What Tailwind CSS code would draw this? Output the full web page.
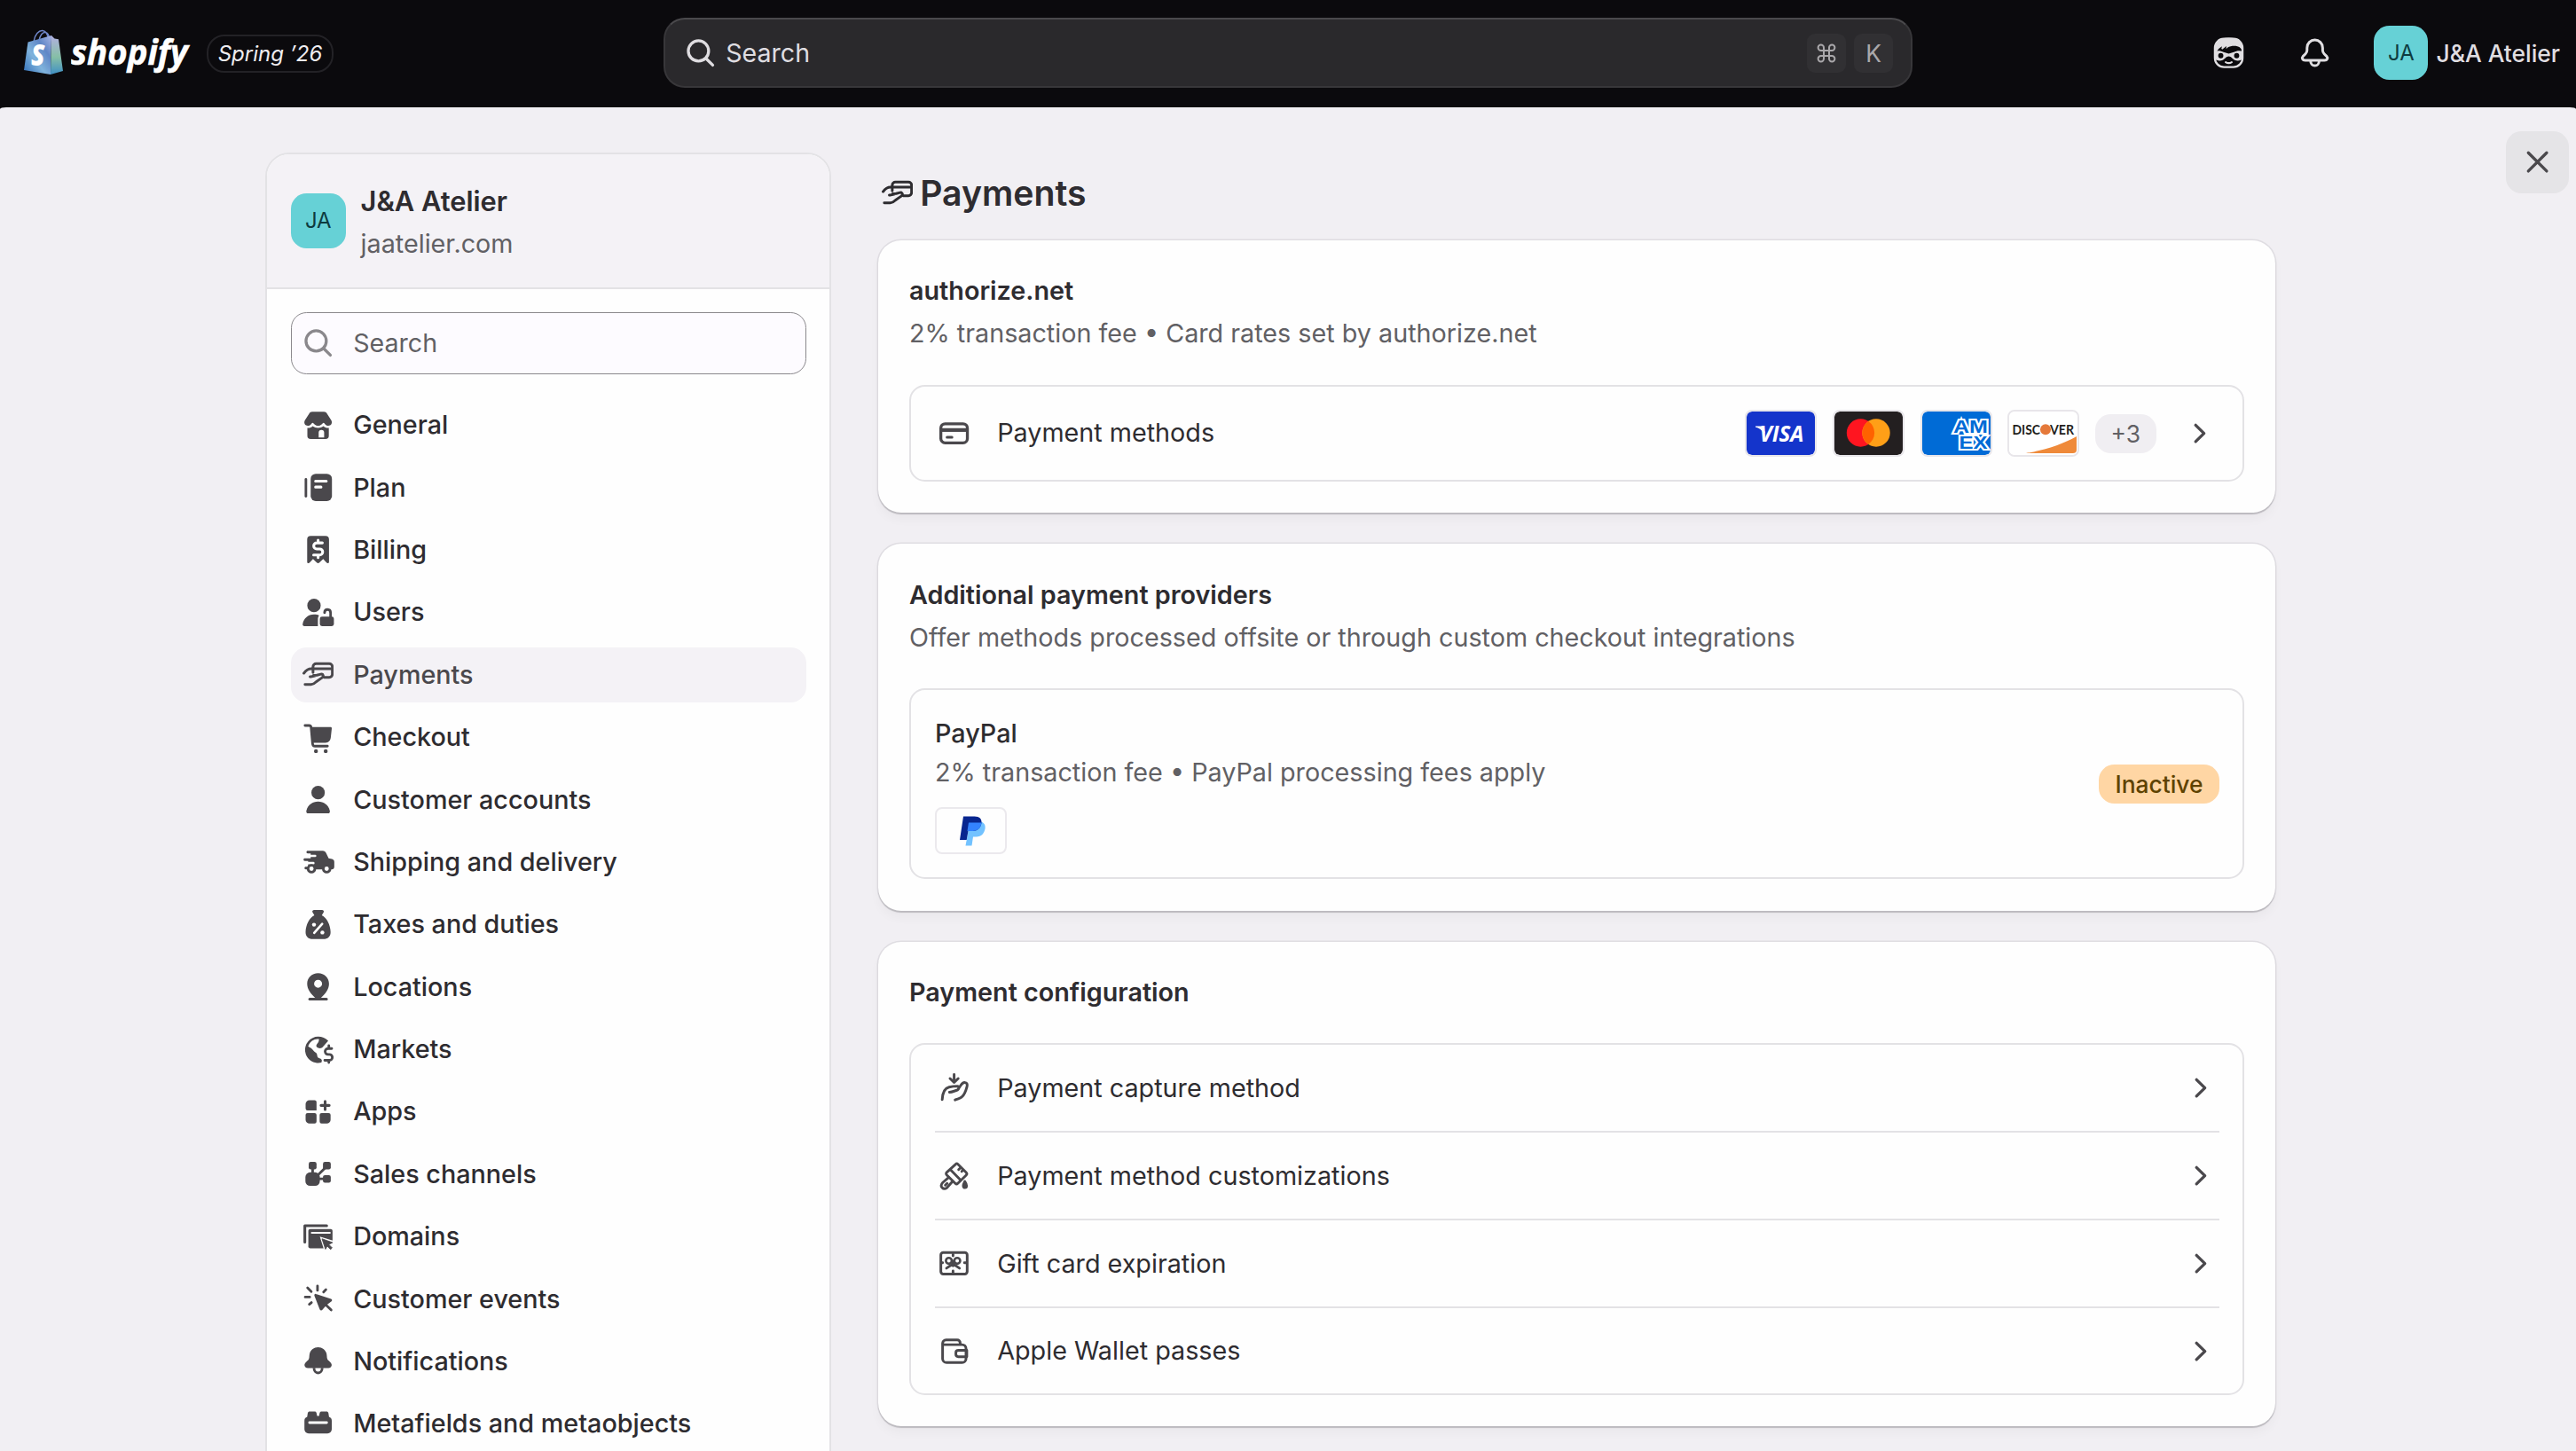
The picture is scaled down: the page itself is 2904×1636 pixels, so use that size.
<!DOCTYPE html>
<html lang="en">
<head>
<meta charset="utf-8">
<title>Payments</title>
<script src="https://cdn.jsdelivr.net/npm/@tailwindcss/browser@4"></script>
</head>
<body class="h-[1636px] w-[2904px] overflow-hidden bg-[#0b0a0d] font-['Inter',sans-serif] text-[28.740px] leading-[44px] text-[#2e2c30]">

<svg class="hidden">
  <symbol id="hand-card" viewBox="0 0 16 16"><g fill="none" stroke="currentColor" stroke-width="1.35" stroke-linecap="round" stroke-linejoin="round"><path d="M.7 7.3C1.6 6 2.7 5 4.6 5M5.4 6.900V4A1.600 1.600 0 0 1 7 2.400h6.700A1.600 1.600 0 0 1 15.300 4v3.800A1.600 1.600 0 0 1 13.700 9.400H11M5.400 5h9.900"/><path d="M3.900 9.100C5 8.900 6 9 7.400 8.300L5.600 8.400M7.400 8.300l2-.5c1.300-.2 1.600 1.200.6 1.800L7 11.700c-.8.8-1.600 1.400-2.600 1.400H1.300"/></g></symbol>
  <symbol id="chevron" viewBox="0 0 16 16"><path d="M6 3.800 10.300 8 6 12.200" fill="none" stroke="currentColor" stroke-width="1.500" stroke-linecap="round" stroke-linejoin="round"/></symbol>
  <symbol id="search" viewBox="0 0 16 16"><g fill="none" stroke="currentColor" stroke-width="1.500" stroke-linecap="round"><circle cx="7" cy="7" r="5.200"/><path d="m10.900 10.900 3.400 3.400"/></g></symbol>
</svg>

<!-- Top bar -->
<header class="grid h-[121px] grid-cols-[748px_1408px_748px]">
  <div class="flex items-center pl-[26px]">
    <svg class="mt-[-4px] h-[53px] w-[46px]" viewBox="0 0 46 53">
      <defs>
        <linearGradient id="bagFront" x1="0" y1="1" x2="1" y2="0"><stop offset="0" stop-color="#2f6db8"/><stop offset=".4" stop-color="#7fb3dc"/><stop offset=".7" stop-color="#5f86c6"/><stop offset="1" stop-color="#a9b4e4"/></linearGradient>
        <linearGradient id="bagSide" x1="0" y1="0" x2="0" y2="1"><stop offset="0" stop-color="#b3b0e2"/><stop offset=".55" stop-color="#86bfa6"/><stop offset="1" stop-color="#3f8fc4"/></linearGradient>
      </defs>
      <path d="M12 15C13 7 18 2 22 2.500c4 .5 6 5 6.500 10M18 14c1-6 4-10 7-9.500 3 .5 4.500 4 5 8" fill="none" stroke="#6f86c8" stroke-width="1.500"/>
      <path d="M5.500 15.500 32 8 31 52 1 47z" fill="url(#bagFront)"/>
      <path d="M32 8l3.500 3.500 4.500.7L45 48l-14 4z" fill="url(#bagSide)"/>
      <text x="9" y="42" font-family="Open Sans" font-style="italic" font-weight="800" font-size="34" fill="#fff" textLength="15.500" lengthAdjust="spacingAndGlyphs">S</text>
    </svg>
    <svg class="ml-[8px] mt-[4px] h-[72px] w-[150px]" viewBox="0 -12 150 72">
      <text x="0" y="34" font-family="Open Sans" font-style="italic" font-weight="700" font-size="40" fill="#fff" stroke="#fff" stroke-width=".6" textLength="132" lengthAdjust="spacingAndGlyphs">shopify</text>
    </svg>
    <div class="ml-[3px] flex h-[43px] w-[143px] items-center justify-center rounded-[20px] border-2 border-[#232226] text-[24px] italic text-[#efedf0] whitespace-nowrap">Spring ’26</div>
  </div>

  <div class="flex items-center">
    <div class="mb-[2px] flex h-[79px] w-full items-center rounded-[24px] border-2 border-[#38373a] border-t-[#4a494c] bg-[#2a292c] pl-[22px] pr-[20px] text-[#dfdde1]">
      <svg class="size-[35.200px]"><use href="#search"/></svg>
      <span class="ml-[11px] grow text-[28.600px]">Search</span>
      <kbd class="flex size-[44px] items-center justify-center rounded-[9px] bg-[#313033] text-[#a9a7aa]">
        <svg class="size-[24px]" viewBox="0 0 24 24" fill="none" stroke="currentColor" stroke-width="2"><path d="M9 9V5.800A3.200 3.200 0 1 0 5.800 9h12.400A3.200 3.200 0 1 0 15 5.800v12.400a3.200 3.200 0 1 0 3.200-3.200H5.800A3.200 3.200 0 1 0 9 18.200z"/></svg>
      </kbd>
      <kbd class="ml-[9px] flex size-[44px] items-center justify-center rounded-[9px] bg-[#313033] font-['Inter',sans-serif] text-[26.400px] text-[#a9a7aa]">K</kbd>
    </div>
  </div>

  <div class="flex items-center justify-end pb-[2px] pr-[18px] text-[#e0dee1]">
    <svg class="mr-[1px] size-[35px]" viewBox="0 0 36 36">
      <rect x="2" y="1.800" width="32" height="32.800" rx="10.500" fill="none" stroke="currentColor" stroke-width="2.400"/>
      <path d="M1 15C1 5.500 7 .6 18 .6s17 4.900 17 14.400l-1 2c-1-3.500-2.500-5.700-6-6.500-4-.8-8-.3-11.500 1.500l-1.500 1.500.3-3.300-4.800 4-1-1 .8-2.600C7.500 12 5.500 14 4 17H1z" fill="currentColor"/>
      <path fill-rule="evenodd" d="M1 16.500c4-1.500 8-1 11 .8l6 1.700 6-1.700c3-1.800 7-2.300 11-.8v8c-3 2.700-6.500 3.500-10 2-2.500-1-4-4.300-7-4.300s-4.500 3.300-7 4.300c-3.500 1.500-7 .7-10-2zM8.800 18.300a3 3 0 1 0 0 6 3 3 0 0 0 0-6zM27.200 18.300a3 3 0 1 0 0 6 3 3 0 0 0 0-6z" fill="currentColor"/>
      <path d="M14.500 29c2.200 1.300 4.800 1.300 7 0" fill="none" stroke="currentColor" stroke-width="2.200" stroke-linecap="round"/>
    </svg>
    <svg class="ml-[61px] size-[35.200px]" viewBox="0 0 16 16" fill="none" stroke="currentColor" stroke-width="1.350" stroke-linejoin="round"><path d="M8 1.400a4 4 0 0 0-4 4v1.300c0 .7-.3 1.300-.8 1.800L2 9.700c-.9 1-.3 2.100 1 2.100h10c1.300 0 1.900-1.100 1-2.100l-1.200-1.200c-.5-.5-.8-1.100-.8-1.800V5.400a4 4 0 0 0-4-4zM5.800 12c0 1.500 1 2.600 2.200 2.600s2.200-1.100 2.200-2.600"/></svg>
    <div class="ml-[49px] flex size-[61px] items-center justify-center rounded-[17.600px] bg-[#66d1d6] text-[24px] text-[#0e3b3f]">JA</div>
    <span class="ml-[9px] whitespace-nowrap text-[26.400px] font-medium">J&amp;A Atelier</span>
  </div>
</header>

<main class="flex h-[1515px] items-start overflow-hidden rounded-t-[7px_2px] bg-[#f1eff3]">

  <!-- Settings navigation -->
  <aside class="ml-[299px] mt-[51px] h-[1600px] w-[638px] shrink-0 overflow-hidden rounded-t-[27px] border-2 border-[#e3e2e5] bg-[#fefefe]">
    <div class="flex h-[152px] items-center border-b-2 border-[#e3e2e5] bg-[#f4f2f6] pl-[27px]">
      <div class="flex size-[61.600px] items-center justify-center rounded-[17.600px] bg-[#66d1d6] text-[24px] text-[#0e3b3f]">JA</div>
      <div class="ml-[17px] mt-[4px]">
        <div class="text-[30.800px] font-semibold leading-[48px]">J&amp;A Atelier</div>
        <div class="leading-[48px] text-[#616064]">jaatelier.com</div>
      </div>
    </div>
    <div class="pl-[27px] pr-[26px] pt-[26px]">
      <div class="flex h-[70px] items-center rounded-[17.600px] border border-[#8a888c] bg-[#fdfbff] pl-[12px] text-[#616064]">
        <svg class="size-[35.200px] text-[#8a888c]"><use href="#search"/></svg>
        <span class="ml-[22px] text-[28.600px]">Search</span>
      </div>
      <nav class="mt-[26.400px] flex flex-col gap-[8.800px] font-medium [&>a]:flex [&>a]:h-[61.600px] [&>a]:items-center [&>a]:gap-[22px] [&>a]:rounded-[17.600px] [&>a]:pl-[13px] [&_svg]:size-[35.200px] [&_svg]:shrink-0 [&_svg]:text-[#4a484c]">
        <a><svg viewBox="0 0 16 16" fill="currentColor"><path d="M5 1h6c.7 0 1.300.4 1.600 1l2.200 3.500c.7 1.500-.2 2.700-1.500 2.700-1 0-1.600-.6-2-1.200-.3-.4-.7-.4-1 0C9.700 7.600 9 8.200 8 8.200S6.300 7.600 5.700 7c-.3-.4-.7-.4-1 0-.4.600-1 1.200-2 1.200-1.300 0-2.200-1.200-1.500-2.700L3.400 2c.3-.6.900-1 1.600-1z"/><path fill-rule="evenodd" d="M2.500 9.300c1.100.1 2-.2 2.700-.9 1.600 1.200 4 1.200 5.600 0 .7.700 1.600 1 2.700.9v4A1.700 1.700 0 0 1 11.800 15H4.200a1.700 1.700 0 0 1-1.700-1.700zM8.300 14.200h2.800v-2.500a1.400 1.400 0 0 0-2.800 0z"/></svg>General</a>
        <a><svg viewBox="0 0 16 16"><rect x="1.100" y="3.200" width="1.300" height="10" rx=".65" fill="currentColor"/><rect x="4.200" y="1" width="10.900" height="14" rx="2.600" fill="currentColor"/><path d="M6.700 4.800h5.500M6.700 7.800h2.800" stroke="#fefefe" stroke-width="1.400" stroke-linecap="round"/></svg>Plan</a>
        <a><svg viewBox="0 0 16 16"><path d="M4.200 1h7.600a1.800 1.800 0 0 1 1.800 1.800v11.500c0 .7-.7.900-1.200.5l-1.800-1.900-1.900 1.800c-.4.400-1 .4-1.400 0l-1.900-1.800-1.800 1.900c-.5.4-1.200.2-1.200-.5V2.800A1.800 1.800 0 0 1 4.200 1z" fill="currentColor"/><path d="M10.200 4.600H7.300a1.550 1.550 0 0 0 0 3.100h1.500a1.550 1.550 0 0 1 0 3.100H5.700M8 3.200v1.200M8 11v1.200" fill="none" stroke="#fefefe" stroke-width="1.400" stroke-linecap="round"/></svg>Billing</a>
        <a><svg viewBox="0 0 16 16" class="overflow-visible" fill="currentColor"><circle cx="5.900" cy="4.400" r="3.450"/><path d="M5.900 9c1.100 0 1.900.1 2.600.5-.4.500-.6 1-.6 1.600V15H1C.3 15 0 14.600.1 14 .5 11.200 2.800 9 5.900 9z"/><rect x="8.900" y="10.100" width="7.200" height="4.900" rx="1.100"/><path d="M11.300 8.100c.1-2.200 3.100-2.100 3.100.1V10.500" fill="none" stroke="currentColor" stroke-width="1.300" stroke-linecap="round"/></svg>Users</a>
        <a class="bg-[#f4f2f6] text-[#4a484c]"><svg><use href="#hand-card"/></svg>Payments</a>
        <a><svg viewBox="0 0 16 16"><path d="M1.300 1.800h2.100c.6 0 .9.300 1 .8l.8 8.700c.1.800.5 1.100 1.200 1.100h6.400" fill="none" stroke="currentColor" stroke-width="1.300" stroke-linecap="round"/><path d="M4.300 2.600H14.300c.5 0 .8.300.7.8L14.500 8c-.2 1.700-1.200 2.700-2.700 2.700H5z" fill="currentColor"/><circle cx="6.900" cy="15" r="1" fill="currentColor"/><circle cx="11.900" cy="15" r="1" fill="currentColor"/></svg>Checkout</a>
        <a><svg viewBox="0 0 16 16" fill="currentColor"><circle cx="8" cy="4.400" r="3.450"/><path d="M8 9c2.900 0 5.200 1.700 6 4.600.2.900-.2 1.400-.9 1.400H2.900c-.7 0-1.100-.5-.9-1.400C2.800 10.700 5.100 9 8 9z"/></svg>Customer accounts</a>
        <a><svg viewBox="0 0 16 16" class="overflow-visible"><path d="M2.700 2.400h7.700c.8 0 1.400.4 1.700 1.100l1.300 2.700 1.700.4c.8.200 1.200.7 1.200 1.500v2.500c0 .9-.5 1.300-1.300 1.300H1.700c-.9 0-.9-1.300 0-1.300h1.200V7.600H1.200c-.9 0-.9-1.300 0-1.300h3V3.700H2.700c-.9 0-.9-1.300 0-1.300z" fill="currentColor"/><path d="M2.400 5h4.100M2 8.700h3.600" stroke="#fefefe" stroke-width="1.200" stroke-linecap="round"/><circle cx="4.600" cy="11.600" r="1.750" fill="#fefefe" stroke="currentColor" stroke-width="1.300"/><circle cx="12.400" cy="11.600" r="1.750" fill="#fefefe" stroke="currentColor" stroke-width="1.300"/></svg>Shipping and delivery</a>
        <a><svg viewBox="0 0 16 16"><path d="M6 .4h4c.8 0 1.200.7.8 1.300l-.9 1.500c2.600 1.200 4.400 5 4.500 8.500.1 2.300-1.500 3.700-3.600 3.700H5.200c-2.100 0-3.700-1.400-3.600-3.700.1-3.500 1.900-7.300 4.500-8.500l-.9-1.500C4.800 1.100 5.200.4 6 .4z" fill="currentColor"/><path d="m6 12.200 4.100-4.600" stroke="#fefefe" stroke-width="1.200" stroke-linecap="round"/><circle cx="5.900" cy="8" r="1" fill="#fefefe"/><circle cx="10.200" cy="12" r="1" fill="#fefefe"/></svg>Taxes and duties</a>
        <a><svg viewBox="0 0 16 16"><path fill-rule="evenodd" d="M8 1c3.200 0 5.600 2.300 5.600 5.500 0 2.800-1.900 5.200-4.100 7.100H6.500C4.300 11.700 2.400 9.300 2.400 6.500 2.400 3.300 4.800 1 8 1zM8 8.500a2.050 2.050 0 1 0 0-4.100 2.050 2.050 0 0 0 0 4.100z" fill="currentColor"/><path d="M3.700 14.300h8.600" stroke="currentColor" stroke-width="1.400" stroke-linecap="round"/></svg>Locations</a>
        <a><svg viewBox="0 0 16 16"><path d="M8 1.300c2 0 3.900.8 5.200 2.100l-2.700 3.100c-.5.600-1.300.9-2.100.7-1.300-.3-1.700-1.300-.9-2.200.9-1 .8-1.400 1-2.400-2.400-.3-4.500.9-5.600 3.600.8.600 1.900.9 2.600 2.100.3.600.9.800 1.500 1.300.8.800.3 1.800 1 2.500.5.400 1.600.3 1.900 1.200.1.400-.1.800-.2 1.300A6.750 6.750 0 1 1 8 1.300z" fill="currentColor"/><path d="M15 7.400h-1.900a1.500 1.500 0 0 0 0 3h.7a1.500 1.500 0 0 1 0 3h-2.400M13.500 5.900v1.300M13.500 13.600v1" fill="none" stroke="currentColor" stroke-width="1.300" stroke-linecap="round"/></svg>Markets</a>
        <a><svg viewBox="0 0 16 16" fill="currentColor"><path d="M3.600 2h2.600a1 1 0 0 1 1 1v4.300H2.600a1 1 0 0 1-1-1V4a2 2 0 0 1 2-2zM1.600 9.600a1 1 0 0 1 1-1h3.600a1 1 0 0 1 1 1V13a1 1 0 0 1-1 1H3.600a2 2 0 0 1-2-2zM8.800 9.600a1 1 0 0 1 1-1h3.600a1 1 0 0 1 1 1V12a2 2 0 0 1-2 2H9.800a1 1 0 0 1-1-1z"/><path d="M11.600 2.600v4.200M9.500 4.700h4.200" stroke="currentColor" stroke-width="1.400" stroke-linecap="round"/></svg>Apps</a>
        <a><svg viewBox="0 0 16 16" fill="currentColor"><path d="M5.200 4v5M7.600 8.900 12 4.500M6 10.500h6" stroke="currentColor" stroke-width="1.300"/><rect x="3.200" y="1.800" width="4" height="3.900" rx="1"/><rect x="10.500" y="1.800" width="4" height="3.900" rx="1"/><rect x="10.500" y="8.600" width="4" height="3.900" rx="1"/><rect x="1.500" y="7.200" width="7.400" height="6.900" rx="2.400"/></svg>Sales channels</a>
        <a><svg viewBox="0 0 16 16"><path d="M1.200 10.700V2.300h11.200" fill="none" stroke="currentColor" stroke-width="1.400" stroke-linecap="round" stroke-linejoin="round"/><path d="M4 4h10.400c.6 0 1 .4 1 1v8.900H4c-.6 0-1-.4-1-1V5c0-.6.4-1 1-1z" fill="currentColor"/><path d="M4.800 5.900h9.200" stroke="#fefefe" stroke-width="1" stroke-linecap="round"/><path d="M8.900 7.900 16 10v4.500H11z" fill="#fefefe"/><path d="m10 9 5.400 1.900-1.900 1 1.700 1.700-.8.800-1.700-1.700-.9 1.600z" fill="currentColor" stroke="currentColor" stroke-width=".4" stroke-linejoin="round"/></svg>Domains</a>
        <a><svg viewBox="0 0 16 16"><path d="M7.700 1.300v2.300M2.600 2.300 4.500 4.200M12 3.200l-1.200 1.200M1.400 7h2.300M3.500 10.700l1.100-.9M12 11l2.700 2.600" fill="none" stroke="currentColor" stroke-width="1.300" stroke-linecap="round"/><path d="m6.800 5.800 7.700 2.500c.3.100.3.400.1.600l-2.400 1.800-2.300 2.600c-.2.300-.6.200-.7-.1L6.500 6.200c-.1-.3.100-.5.300-.4z" fill="currentColor" stroke="currentColor" stroke-width=".8"/></svg>Customer events</a>
        <a><svg viewBox="0 0 16 16"><path d="M8 .9c2.600 0 4.500 2 4.500 4.500 0 1.200.3 1.900 1 2.500l.9.800c1.200 1.200.4 2.900-1.200 2.900H2.800c-1.600 0-2.400-1.700-1.200-2.900l.9-.8c.7-.6 1-1.300 1-2.500C3.500 2.900 5.400.9 8 .9z" fill="currentColor"/><path d="M5.900 11.500c0 1.500.9 2.600 2.100 2.600s2.100-1.100 2.100-2.600" fill="none" stroke="currentColor" stroke-width="1.300"/></svg>Notifications</a>
        <a><svg viewBox="0 0 16 16"><path d="M3.700 1.600h2.500c.5 0 .9.300 1 .8l.3 1.500h1l.3-1.500c.1-.5.500-.8 1-.8h2.500c.5 0 .9.300 1 .8l.3 1.900c.9.300 1.400 1 1.400 1.900v4.400c0 1.200-.9 2.200-2.200 2.200H3.200C1.900 12.800 1 11.800 1 10.600V6.200c0-.9.500-1.600 1.400-1.900l.3-1.900c.1-.5.500-.8 1-.8z" fill="currentColor"/><path d="M3.600 7.300h8.800" stroke="#fefefe" stroke-width="1.300" stroke-linecap="round"/></svg>Metafields and metaobjects</a>
      </nav>
    </div>
  </aside>

  <!-- Payments settings -->
  <section class="ml-[53px] mt-[70px] w-[1575px] shrink-0">
    <h1 class="flex h-[54px] items-center pl-[4px] text-[39.200px] font-semibold leading-[54px]">
      <svg class="size-[35.200px]"><use href="#hand-card"/></svg>
      <span class="ml-[8px]">Payments</span>
    </h1>

    <div class="mt-[26px] flex flex-col gap-[35px] [&_h2]:font-semibold [&_h2]:leading-[44px]">
      <div class="h-[307px] rounded-[26px] bg-[#fefefe] px-[35px] pt-[35px] shadow-[0_2px_1px_0_#bcbabf,0_0_0_1.500px_#dfdde2,0_8px_12px_0_rgb(0_0_0/0.030)]">
        <h2>authorize.net</h2>
        <p class="mt-[4px] text-[#616064]">2% transaction fee • Card rates set by authorize.net</p>
        <div class="mt-[36px] flex h-[109px] items-center rounded-[17.600px] border-2 border-[#e3e2e5] pl-[31px] pr-[31px]">
          <svg class="size-[35.200px] text-[#4a484c]" viewBox="0 0 16 16" fill="none" stroke="currentColor" stroke-width="1.500" stroke-linecap="round"><rect x="1.200" y="3.100" width="13.600" height="9.800" rx="2.200"/><path d="M1.500 6.300h13" stroke-width="1.900" stroke-linecap="butt"/><path d="M4.400 10h2.500" stroke-width="1.400"/></svg>
          <span class="mb-[1px] ml-[31px] grow">Payment methods</span>
          <div class="flex items-center gap-[17.600px] [&>svg]:h-[53px] [&>svg]:w-[81px] [&>svg]:rounded-[8px] [&>svg]:border-2 [&>svg]:border-[#e8e6ea]">
            <svg viewBox="0 0 77 49"><rect width="77" height="49" rx="6" fill="#1434cb"/><text x="14.500" y="34" font-family="Open Sans" font-style="italic" font-weight="700" font-size="24.500" fill="#fff" textLength="50" lengthAdjust="spacingAndGlyphs">VISA</text><path d="M10 16.500h7l4 7-2 1c-1.500-3.500-5-6-9-7z" fill="#fff"/></svg>
            <svg viewBox="0 0 77 49"><rect width="77" height="49" rx="6" fill="#231f20"/><circle cx="29.500" cy="24" r="15.700" fill="#ff1520"/><circle cx="47" cy="24" r="15.700" fill="#ff9f17"/><path d="M38.250 11a15.700 15.700 0 0 1 0 26 15.700 15.700 0 0 1 0-26z" fill="#ff6200"/></svg>
            <svg viewBox="0 0 77 49"><rect width="77" height="49" rx="6" fill="#006bd6"/><g font-family="Liberation Sans" font-weight="700" fill="#006bd6" stroke="#fff" stroke-width="4" paint-order="stroke" stroke-linejoin="miter"><text x="35" y="23.500" font-size="21" textLength="39" lengthAdjust="spacingAndGlyphs">AM</text><text x="41.500" y="42" font-size="20.500" textLength="32" lengthAdjust="spacingAndGlyphs">EX</text></g></svg>
            <svg viewBox="0 0 77 49"><rect width="77" height="49" rx="6" fill="#fff"/><path d="M76 28v15a4 4 0 0 1-4 4H19C43 43 62 36 76 28z" fill="#ef8a3a"/><g font-family="Lato" font-weight="700" font-size="15" fill="#231f20"><text x="3.500" y="25.500" textLength="31.500" lengthAdjust="spacingAndGlyphs">DISC</text><text x="46" y="25.500" textLength="27" lengthAdjust="spacingAndGlyphs">VER</text></g><circle cx="41" cy="20.300" r="6" fill="#e5793a"/></svg>
            <span class="flex h-[44px] w-[69px] items-center justify-center rounded-[17.600px] bg-[#f0eef2] text-[26.400px] text-[#616064]">+3</span>
          </div>
          <svg class="ml-[31px] size-[35.200px] text-[#4a484c]"><use href="#chevron"/></svg>
        </div>
      </div>

      <div class="h-[414px] rounded-[26px] bg-[#fefefe] px-[35px] pt-[36px] shadow-[0_2px_1px_0_#bcbabf,0_0_0_1.500px_#dfdde2,0_8px_12px_0_rgb(0_0_0/0.030)]">
        <h2>Additional payment providers</h2>
        <p class="mt-[4px] text-[#616064]">Offer methods processed offsite or through custom checkout integrations</p>
        <div class="mt-[35px] flex h-[215px] items-center justify-between rounded-[17.600px] border-2 border-[#e3e2e5] pl-[27px] pr-[26px]">
          <div>
            <div class="font-medium">PayPal</div>
            <p class="text-[#616064]">2% transaction fee • PayPal processing fees apply</p>
            <svg class="mt-[17px] h-[53px] w-[81px] rounded-[8px] border-2 border-[#ebe9ed]" viewBox="0 0 77 49"><path d="M37.500 14.500h11c4 0 7 3 6 8-1 5-4 9-10 9h-3.500L39.500 41.500h-7z" fill="#72c2ff"/><path d="M30 8.500h12.500c6 0 8.500 3 8 7.500-1 6-5 9-10 9h-5l-1.800 10H26z" fill="#08268f"/><path d="M36 15.500h14.500c-.7 6-4.500 9.500-10 9.500h-6z" fill="#3382ff"/></svg>
          </div>
          <span class="flex h-[44px] w-[136px] items-center justify-center rounded-[17.600px] bg-[#ffd6a4] text-[26.400px] font-medium text-[#5e4200]">Inactive</span>
        </div>
      </div>

      <div class="h-[546px] rounded-[26px] bg-[#fefefe] px-[35px] pt-[35px] shadow-[0_2px_1px_0_#bcbabf,0_0_0_1.500px_#dfdde2,0_8px_12px_0_rgb(0_0_0/0.030)]">
        <h2>Payment configuration</h2>
        <div class="mt-[35px] flex h-[397px] flex-col rounded-[17.600px] border-2 border-[#e3e2e5] pl-[27px] pr-[26px] [&>a]:flex [&>a]:h-[98.800px] [&>a]:shrink-0 [&>a]:items-center [&>a]:px-[4px] [&>a:first-child]:h-[97.400px] [&>a+a]:border-t-2 [&>a+a]:border-[#e3e2e5] [&_svg]:size-[35.200px] [&_svg]:text-[#4a484c] [&_span]:ml-[31px] [&_span]:grow">
          <a><svg viewBox="0 0 16 16" fill="none" stroke="currentColor" stroke-width="1.350" stroke-linecap="round" stroke-linejoin="round"><path d="M8 1.100v4M5.900 3.200 8 5.200l2.100-2"/><path d="M1.900 14c.2-3.500 1.300-5.900 3.500-6.400 1.700-.4 2.800-.5 4.300-.5 1 0 .9 1.800-.3 2.100-1.300.4-2.600 1-3.800 1M9.800 9.100 11.400 6.700c.7-1.100 1.500-1.600 2.300-1.400.9.2 1.200 1 .9 2-.6 2.300-1.500 4.400-2.700 5.400-.9.800-2 .9-3.400 1.500"/></svg><span>Payment capture method</span><svg><use href="#chevron"/></svg></a>
          <a><svg viewBox="0 0 16 16" fill="none" stroke="currentColor" stroke-width="1.300" stroke-linecap="round" stroke-linejoin="round"><path d="M8.700 2.200c.4-.4.900-.4 1.300 0l4.200 4.200c.4.400.4.900 0 1.300l-4.300 4.200c-.4.400-.9.400-1.300 0L4.200 7.600c-.4-.4-.4-.9 0-1.300zM6.100 4.900l5.100 5.200M11.500 3.700l-1.200 1.200M12.700 5l-.8.800"/><path d="M5.200 8.900 2.200 11.500c-1.900 1.900.2 4.200 2.200 2.600l2.800-3.200M3.500 12.800l.9-.9"/><path d="M13.500 10.900c.7 1 .9 1.600.9 2.300 0 1.300-1.700 1.300-1.700 0 0-.7.300-1.300.8-2.300z" fill="currentColor"/></svg><span>Payment method customizations</span><svg><use href="#chevron"/></svg></a>
          <a><svg viewBox="0 0 16 16" fill="none" stroke="currentColor" stroke-width="1.350" stroke-linecap="round" stroke-linejoin="round"><rect x="1.200" y="2.400" width="13.500" height="11" rx="1.200"/><circle cx="5.300" cy="6.600" r="1.500" stroke-width="1.200"/><circle cx="9.600" cy="6.600" r="1.500" stroke-width="1.200"/><path d="M7.450 8.200 4.100 10.400M7.450 8.200l3.300 2.200M7.450 3.400v.7M7.450 11.800v.8M1.800 7.600h.3M13.300 7.600h.9M7.450 6.800v2.400"/></svg><span>Gift card expiration</span><svg><use href="#chevron"/></svg></a>
          <a><svg viewBox="0 0 16 16" fill="none" stroke="currentColor" stroke-width="1.350" stroke-linecap="round" stroke-linejoin="round"><path d="M2.100 4.600v7.200c0 1.100.9 2 2 2h8c1.100 0 2-.9 2-2v-5.200c0-1.100-.9-2-2-2zM2.100 4.600V4c0-1 .7-1.800 1.800-1.800h5.700c.9 0 1.500.7 1.500 1.500v.7"/><path d="M14.500 7.500h-4.300c-.8 0-1.300.5-1.300 1.200v.9c0 .7.500 1.200 1.300 1.200h4.300z"/></svg><span>Apple Wallet passes</span><svg><use href="#chevron"/></svg></a>
        </div>
      </div>
    </div>
  </section>

  <button class="ml-auto mr-[8px] mt-[27px] flex h-[70px] w-[71px] items-center justify-center rounded-[17.600px] bg-[#e5e4e7] text-[#4a484c]">
    <svg class="size-[35.200px]" viewBox="0 0 16 16" fill="none" stroke="currentColor" stroke-width="1.500" stroke-linecap="round"><path d="m3.300 3.300 9.400 9.400M12.700 3.300l-9.400 9.400"/></svg>
  </button>
</main>
</body>
</html>
